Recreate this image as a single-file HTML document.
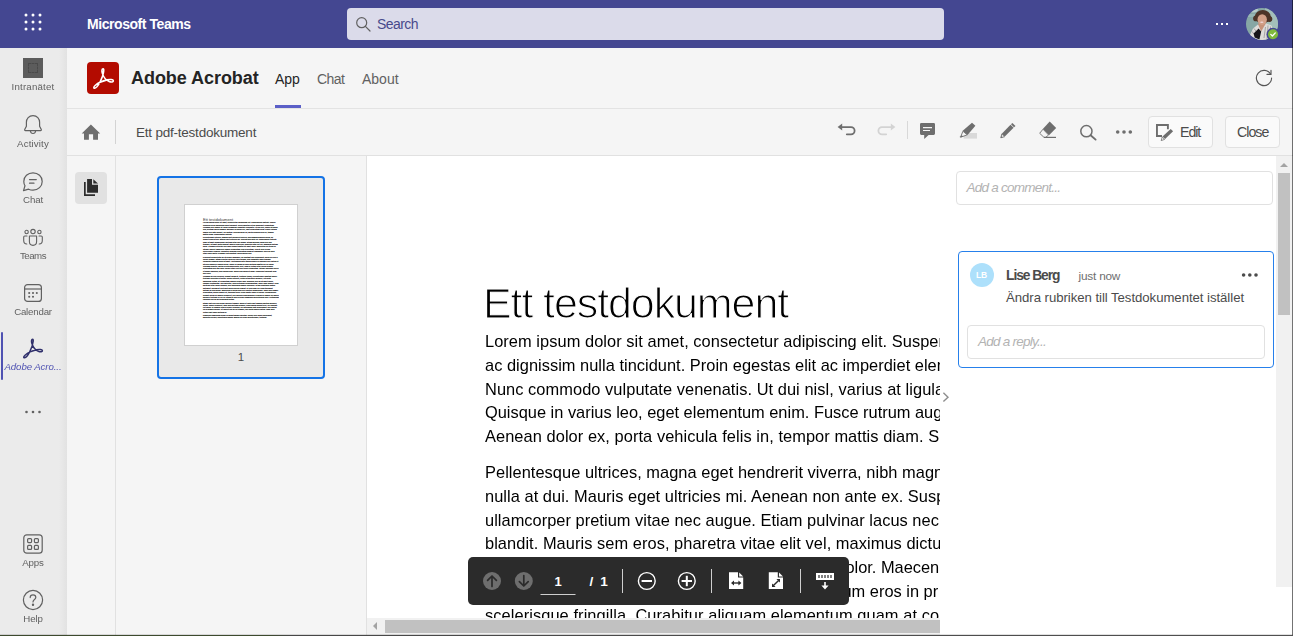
<!DOCTYPE html>
<html lang="en">
<head>
<meta charset="utf-8">
<title>Adobe Acrobat | Microsoft Teams</title>
<style>
*{box-sizing:border-box;margin:0;padding:0}
html,body{width:1293px;height:636px;overflow:hidden;background:#f5f5f5;font-family:"Liberation Sans",sans-serif;}
#root{position:relative;width:1293px;height:636px;overflow:hidden;background:#f5f5f5}
.abs{position:absolute}
.t{position:absolute;white-space:nowrap;line-height:1}
/* top bar */
#topbar{left:0;top:0;width:1293px;height:48px;background:#444791}
#search{left:347px;top:8px;width:597px;height:32px;border-radius:4px;background:#dbdbea}
/* rail */
#rail{left:0;top:48px;width:67px;height:588px;background:linear-gradient(to right,#ebebeb 0,#ebebeb 59px,#e2e2e2 67px)}
.rl{will-change:transform;position:absolute;left:0;width:66px;text-align:center;font-size:9.7px;line-height:12px;color:#616161;white-space:nowrap}
/* header */
#hdr{left:67px;top:48px;width:1226px;height:61px;background:#f5f5f5;border-bottom:1px solid #e3e3e3}
#tbar{left:67px;top:109px;width:1226px;height:47px;background:#f5f5f5;border-bottom:1px solid #e1e1e1}
.btn{position:absolute;top:116px;height:32px;border:1px solid #e1e1e1;border-radius:4px;background:#fafafa}
/* doc */
#doc{left:367px;top:156px;width:573px;height:462px;background:#fff;overflow:hidden}
.dl{will-change:transform;position:absolute;left:117.8px;white-space:nowrap;font-size:16.4px;line-height:20px;color:#000;letter-spacing:0}
#cpanel{left:940px;top:156px;width:353px;height:480px;background:#fff}
</style>
</head>
<body>
<div id="root">

<!-- ===== TOP BAR ===== -->
<div id="topbar" class="abs">
  <svg class="abs" style="left:22px;top:11px" width="22" height="22" viewBox="0 0 22 22" fill="#fff">
    <circle cx="4" cy="4" r="1.5"/><circle cx="11" cy="4" r="1.5"/><circle cx="18" cy="4" r="1.5"/>
    <circle cx="4" cy="11" r="1.5"/><circle cx="11" cy="11" r="1.5"/><circle cx="18" cy="11" r="1.5"/>
    <circle cx="4" cy="18" r="1.5"/><circle cx="11" cy="18" r="1.5"/><circle cx="18" cy="18" r="1.5"/>
  </svg>
  <div class="t" style="left:87px;top:17px;font-size:14px;font-weight:bold;color:#fff;letter-spacing:-0.44px">Microsoft Teams</div>
  <div id="search" class="abs">
    <svg class="abs" style="left:8px;top:8px" width="16" height="16" viewBox="0 0 16 16" fill="none" stroke="#616161" stroke-width="1.2" stroke-linecap="round"><circle cx="6.7" cy="6.7" r="5"/><path d="M10.4 10.4 L15 15"/></svg>
    <div class="t" style="left:30px;top:9px;font-size:14px;color:#484a8c;letter-spacing:-0.55px">Search</div>
  </div>
  <svg class="abs" style="left:1215.2px;top:22px" width="16" height="4" viewBox="0 0 16 4" fill="#fff"><rect x="1" y="1" width="2" height="2"/><rect x="6" y="1" width="2" height="2"/><rect x="11" y="1" width="2" height="2"/></svg>
  <!-- avatar -->
  <svg class="abs" style="left:1244px;top:6px" width="38" height="38" viewBox="0 0 38 38">
    <defs><clipPath id="avc"><circle cx="18" cy="18" r="16"/></clipPath></defs>
    <g clip-path="url(#avc)">
      <rect width="38" height="38" fill="#86a7a5"/>
      <rect x="21" y="0" width="17" height="38" fill="#a3bfba"/>
      <rect x="0" y="8" width="14" height="3" fill="#9dbcbb" opacity="0.7"/>
      <ellipse cx="9" cy="4" rx="5" ry="2.4" fill="#c5d6d3" opacity="0.8"/>
      <path d="M5 31 L9 22.5 L14 18.6 L17.5 22 L22 17.6 L27.5 19.6 L30 25 L30 36 L7 36 Z" fill="#dedcda"/>
      <path d="M8 25.5 L12 30.5 M10 22.5 L14.5 28.5 M21.5 21 L20 32 M24 19.5 L23 33 M26.5 20.5 L26 30" stroke="#8c8c8c" stroke-width="0.7" fill="none"/>
      <path d="M13.8 17.6 L22 17 L17.2 25.4 Z" fill="#c79279"/>
      <path d="M9.6 27.4 L14.6 22.4 L17.2 25.4 L15.4 33.6 L10.6 31.6 Z" fill="#17151a"/>
      <ellipse cx="18.8" cy="10.6" rx="8" ry="6.6" fill="#4d3427"/>
      <circle cx="12" cy="12.4" r="2.9" fill="#4d3427"/>
      <circle cx="25.4" cy="13" r="3" fill="#4d3427"/>
      <ellipse cx="18.2" cy="13.6" rx="4.7" ry="5.3" fill="#d3a088"/>
      <ellipse cx="17.8" cy="16.3" rx="1.7" ry="0.8" fill="#f0d6d6"/>
    </g>
    <circle cx="29" cy="28.3" r="6.5" fill="#444791"/>
    <circle cx="29" cy="28.3" r="5" fill="#7fba3c"/>
    <path d="M26.8 28.4 L28.4 30 L31.3 26.9" fill="none" stroke="#fff" stroke-width="1.3" stroke-linecap="round" stroke-linejoin="round"/>
  </svg>
</div>

<!-- ===== LEFT RAIL ===== -->
<div id="rail" class="abs">
  <!-- Intranätet -->
  <div class="abs" style="left:23px;top:10px;width:20px;height:20px;background:#5c5c5c"></div>
  <div class="abs" style="left:28px;top:15px;width:10px;height:10px;border:1px dashed #4a4a4a"></div>
  <div class="rl" style="top:33px;letter-spacing:0.2px">Intranätet</div>
  <!-- Activity -->
  <svg class="abs" style="left:23px;top:66px" width="20" height="22" viewBox="0 0 20 22" fill="none" stroke="#616161" stroke-width="1.2" stroke-linejoin="round" stroke-linecap="round"><path d="M10 1.6 C5.9 1.6 3.4 4.6 3.4 8.2 L3.4 12.2 L1.7 15.6 C1.5 16.1 1.8 16.6 2.4 16.6 L17.6 16.6 C18.2 16.6 18.5 16.1 18.3 15.6 L16.6 12.2 L16.6 8.2 C16.6 4.6 14.1 1.6 10 1.6 Z"/><path d="M7.4 17 C7.6 18.6 8.7 19.5 10 19.5 C11.3 19.5 12.4 18.6 12.6 17"/></svg>
  <div class="rl" style="top:90px;letter-spacing:0.15px">Activity</div>
  <!-- Chat -->
  <svg class="abs" style="left:22px;top:122.7px" width="22" height="22" viewBox="0 0 22 22" fill="none" stroke="#616161" stroke-width="1.2" stroke-linejoin="round" stroke-linecap="round"><path d="M11 1.8 C5.8 1.8 1.8 5.6 1.8 10.4 C1.8 12 2.3 13.5 3 14.7 L1.5 19.6 L6.6 18.2 C7.9 18.8 9.4 19.1 11 19.1 C16.2 19.1 20.2 15.3 20.2 10.4 C20.2 5.6 16.2 1.8 11 1.8 Z"/><path d="M7.5 8.6 L14.3 8.6 M7.5 12.2 L12 12.2"/></svg>
  <div class="rl" style="top:146px;letter-spacing:-0.15px">Chat</div>
  <!-- Teams -->
  <svg class="abs" style="left:22px;top:180px" width="22" height="20" viewBox="0 0 22 20" fill="none" stroke="#616161" stroke-width="1.1" stroke-linejoin="round" stroke-linecap="round"><circle cx="11" cy="3.6" r="2.2"/><circle cx="4.6" cy="4" r="1.7"/><circle cx="17.4" cy="4" r="1.7"/><path d="M7.4 8 L14.6 8 L14.6 13.6 C14.6 15.8 13 17.4 11 17.4 C9 17.4 7.4 15.8 7.4 13.6 Z"/><path d="M5 8 L2.8 8 C2.2 8 1.7 8.5 1.7 9.1 L1.7 12.6 C1.7 14.6 3 16 4.8 16"/><path d="M17 8 L19.2 8 C19.8 8 20.3 8.5 20.3 9.1 L20.3 12.6 C20.3 14.6 19 16 17.2 16"/></svg>
  <div class="rl" style="top:202px;letter-spacing:-0.5px">Teams</div>
  <!-- Calendar -->
  <svg class="abs" style="left:23px;top:235px" width="20" height="20" viewBox="0 0 20 20" fill="none" stroke="#616161" stroke-width="1.2"><rect x="1.6" y="1.6" width="16.8" height="16.8" rx="3"/><path d="M1.6 6 L18.4 6"/><g fill="#616161" stroke="none"><circle cx="6.2" cy="10" r="1.05"/><circle cx="10" cy="10" r="1.05"/><circle cx="13.8" cy="10" r="1.05"/><circle cx="6.2" cy="13.8" r="1.05"/><circle cx="10" cy="13.8" r="1.05"/></g></svg>
  <div class="rl" style="top:258px;letter-spacing:-0.2px">Calendar</div>
  <!-- Adobe selected -->
  <div class="abs" style="left:1px;top:284px;width:2px;height:48px;background:#4f52b2;border-radius:1px"></div>
  <svg class="abs" style="left:22px;top:290px" width="22" height="21" viewBox="0 0 22 21" fill="none" stroke="#2f2f6b" stroke-width="1.5" stroke-linecap="round" stroke-linejoin="round"><path d="M10.6 1.2 C9.4 1.2 9.2 3.4 9.9 5.6 C10.8 8.6 13.2 12 16.4 13.4 C18.6 14.3 20.6 13.8 20.4 12.6 C20.2 11.4 17.4 11.2 14.4 11.8 C10.6 12.6 6 14.6 3 17.2 C1.4 18.6 1.4 20 2.6 19.8 C4 19.6 6 17.2 7.8 13.6 C9.6 10 11 5.6 11.2 3.2 C11.3 1.8 11.1 1.2 10.6 1.2 Z"/></svg>
  <div class="rl" style="top:313px;color:#4f52b2;font-style:italic;letter-spacing:-0.1px">Adobe Acro...</div>
  <!-- more -->
  <svg class="abs" style="left:24px;top:361px" width="18" height="6" viewBox="0 0 18 6" fill="#616161"><circle cx="2.5" cy="3" r="1.3"/><circle cx="9" cy="3" r="1.3"/><circle cx="15.5" cy="3" r="1.3"/></svg>
  <!-- Apps -->
  <svg class="abs" style="left:23px;top:486px" width="20" height="20" viewBox="0 0 20 20" fill="none" stroke="#616161" stroke-width="1.2"><rect x="0.8" y="0.8" width="18.4" height="18.4" rx="3"/><rect x="4.6" y="4.6" width="4" height="4" rx="1"/><rect x="11.4" y="4.6" width="4" height="4" rx="1"/><rect x="4.6" y="11.4" width="4" height="4" rx="1"/><rect x="11.4" y="11.4" width="4" height="4" rx="1"/></svg>
  <div class="rl" style="top:509px;letter-spacing:-0.1px">Apps</div>
  <!-- Help -->
  <svg class="abs" style="left:22px;top:541px" width="22" height="22" viewBox="0 0 22 22" fill="none" stroke="#616161" stroke-width="1.2" stroke-linecap="round"><circle cx="11" cy="11" r="9.6"/><path d="M8.2 8.6 C8.2 6.9 9.4 5.9 11 5.9 C12.6 5.9 13.8 6.9 13.8 8.4 C13.8 10.6 11 10.6 11 13"/><circle cx="11" cy="15.8" r="0.6" fill="#616161"/></svg>
  <div class="rl" style="top:565px;letter-spacing:-0.15px">Help</div>
</div>

<!-- ===== APP HEADER ===== -->
<div id="hdr" class="abs"></div>
<div class="abs" style="left:87px;top:62px;width:32px;height:32px;border-radius:4px;background:#b30b00"></div>
<svg class="abs" style="left:91.5px;top:66.5px" width="23" height="23" viewBox="0 0 22 21" fill="none" stroke="#fff" stroke-width="1.5" stroke-linecap="round" stroke-linejoin="round"><path d="M10.6 1.2 C9.4 1.2 9.2 3.4 9.9 5.6 C10.8 8.6 13.2 12 16.4 13.4 C18.6 14.3 20.6 13.8 20.4 12.6 C20.2 11.4 17.4 11.2 14.4 11.8 C10.6 12.6 6 14.6 3 17.2 C1.4 18.6 1.4 20 2.6 19.8 C4 19.6 6 17.2 7.8 13.6 C9.6 10 11 5.6 11.2 3.2 C11.3 1.8 11.1 1.2 10.6 1.2 Z"/></svg>
<div class="t" style="left:131px;top:69px;font-size:18px;font-weight:bold;color:#242424;letter-spacing:-0.05px">Adobe Acrobat</div>
<div class="t" style="left:275px;top:72px;font-size:14px;color:#242424">App</div>
<div class="t" style="left:317px;top:72px;font-size:14px;color:#616161;letter-spacing:-0.6px">Chat</div>
<div class="t" style="left:362px;top:72px;font-size:14px;color:#616161">About</div>
<div class="abs" style="left:275px;top:105px;width:26px;height:3px;background:#5b5fc7"></div>
<svg class="abs" style="left:1254px;top:68px" width="20" height="20" viewBox="0 0 20 20" fill="none" stroke="#555" stroke-width="1.15" stroke-linecap="round" stroke-linejoin="round"><path d="M16.6 6.2 A7.6 7.6 0 1 0 17.6 10"/><path d="M17 2.4 L17 6.4 L13 6.4"/></svg>

<!-- ===== ACROBAT TOOLBAR ===== -->
<div id="tbar" class="abs"></div>
<!-- home -->
<svg class="abs" style="left:80px;top:122px" width="22" height="20" viewBox="80 122 22 20"><path d="M90.9 124.5 L100.2 133.6 L98 133.6 L98 139.8 L93.1 139.8 L93.1 134.2 L88.9 134.2 L88.9 139.8 L84 139.8 L84 133.6 L81.7 133.6 Z" fill="#6e6e6e"/></svg>
<div class="t" style="left:136px;top:125.6px;font-size:13.5px;color:#4b4b4b;letter-spacing:-0.22px">Ett pdf-testdokument</div>
<!-- undo / redo -->
<svg class="abs" style="left:834px;top:118px" width="66" height="24" viewBox="834 118 66 24" fill="none" stroke-linecap="round">
  <path d="M842 127.1 L851 127.1 A3.6 3.6 0 0 1 851 134.3 L846.8 134.3" stroke="#6e6e6e" stroke-width="1.8"/>
  <path d="M837.6 127.1 L842.2 123.6 L842.2 130.6 Z" fill="#6e6e6e"/>
  <path d="M891 127.1 L882 127.1 A3.6 3.6 0 0 0 882 134.3 L886.2 134.3" stroke="#d3d3d3" stroke-width="1.8"/>
  <path d="M895.4 127.1 L890.8 123.6 L890.8 130.6 Z" fill="#d3d3d3"/>
</svg>
<div class="abs" style="left:907px;top:121px;width:1px;height:18px;background:#d8d8d8"></div>
<!-- comment -->
<svg class="abs" style="left:918px;top:120px" width="20" height="22" viewBox="918 120 20 22">
  <path d="M921.3 123 L933.7 123 Q935 123 935 124.3 L935 133.6 Q935 134.9 933.7 134.9 L928.6 134.9 L924.2 138.9 L924.2 134.9 L921.3 134.9 Q920 134.9 920 133.6 L920 124.3 Q920 123 921.3 123 Z" fill="#6e6e6e"/>
  <path d="M923 127.6 L932 127.6 M923 130.5 L930 130.5" stroke="#f5f5f5" stroke-width="1.2"/>
</svg>
<!-- highlighter -->
<svg class="abs" style="left:957px;top:120px" width="22" height="22" viewBox="957 120 22 22">
  <rect x="963.7" y="133" width="13.3" height="5.6" fill="#d9d9d9"/>
  <path d="M972 122.8 L975.4 125.8 L967.5 134.9 L962.7 130.8 Z" fill="#6e6e6e"/>
  <path d="M962.9 131.2 L967.2 134.8 L963 136.4 L961 136.2 Z" fill="#f5f5f5" stroke="#6e6e6e" stroke-width="0.9" stroke-linejoin="round"/>
  <path d="M961.2 135.6 L963.4 136.6 L960.8 137.8 L959.6 137 Z" fill="#6e6e6e"/>
</svg>
<!-- pencil -->
<svg class="abs" style="left:998px;top:120px" width="20" height="20" viewBox="998 120 20 20">
  <path d="M1012.4 122.9 L1015.5 125.9 L1014 127.3 L1011 124.3 Z" fill="#6e6e6e"/>
  <path d="M1010.5 124.8 L1013.6 127.7 L1004.8 136.6 L1001.8 133.7 Z" fill="#6e6e6e"/>
  <path d="M1001.8 134 L1004.5 136.7 L1000.8 137.8 Z" fill="#f5f5f5" stroke="#6e6e6e" stroke-width="0.9" stroke-linejoin="round"/>
  <path d="M1001.3 136 L1002.6 137.2 L1000.7 137.9 Z" fill="#6e6e6e"/>
</svg>
<!-- eraser -->
<svg class="abs" style="left:1037px;top:119px" width="22" height="22" viewBox="1037 119 22 22">
  <path d="M1049.7 121.6 L1056.2 128 L1049 135.3 L1042.8 128.9 Z" fill="#6e6e6e"/>
  <path d="M1043 129.2 L1048.6 135 L1045.6 137.4 L1044 137.4 L1039.7 133.3 Z" fill="#f5f5f5" stroke="#6e6e6e" stroke-width="0.9" stroke-linejoin="round"/>
  <path d="M1044 137.4 L1056 137.4" stroke="#6e6e6e" stroke-width="1.2"/>
</svg>
<!-- search -->
<svg class="abs" style="left:1077px;top:122px" width="22" height="20" viewBox="1077 122 22 20" fill="none" stroke="#6e6e6e" stroke-linecap="round"><circle cx="1086.4" cy="131.2" r="5.6" stroke-width="1.5"/><path d="M1090.6 135.2 L1095.6 139.6" stroke-width="1.9"/></svg>
<!-- more -->
<svg class="abs" style="left:1114px;top:129px" width="20" height="6" viewBox="1114 129 20 6" fill="#6e6e6e"><circle cx="1117.7" cy="132" r="1.8"/><circle cx="1124" cy="132" r="1.8"/><circle cx="1130.3" cy="132" r="1.8"/></svg>
<!-- Edit / Close -->
<div class="btn" style="left:1148px;width:65px"></div>
<svg class="abs" style="left:1154px;top:122px" width="22" height="22" viewBox="1154 122 22 22">
  <path d="M1167.9 129.3 L1167.9 125.05 L1156.95 125.05 L1156.95 135.95 L1162 135.95" fill="none" stroke="#6e6e6e" stroke-width="1.9" stroke-linejoin="miter"/>
  <path d="M1170.7 128.9 L1173.1 131.3 L1165.1 139 L1162.5 136.5 Z" fill="#6e6e6e"/>
  <path d="M1162.2 137 L1164.6 139.4 L1161.2 140.6 Z" fill="#fafafa" stroke="#6e6e6e" stroke-width="0.8" stroke-linejoin="round"/>
</svg>
<div class="t" style="left:1180px;top:125px;font-size:14.2px;color:#4b4b4b;letter-spacing:-1.05px">Edit</div>
<div class="btn" style="left:1225px;width:55px"></div>
<div class="t" style="left:1237px;top:125px;font-size:14.2px;color:#4b4b4b;letter-spacing:-1.0px">Close</div>

<!-- ===== LEFT PDF SIDEBAR ===== -->
<div class="abs" style="left:115px;top:120px;width:1px;height:24px;background:#d3d3d3"></div>
<div class="abs" style="left:115px;top:156px;width:1px;height:480px;background:#e1e1e1"></div>
<div class="abs" style="left:366px;top:156px;width:1px;height:480px;background:#e1e1e1"></div>
<div class="abs" style="left:75px;top:172px;width:32px;height:32px;border-radius:4px;background:#e1e1e1"></div>
<svg class="abs" style="left:82px;top:177px" width="18" height="20" viewBox="82 177 18 20" fill="#2c2c2c">
  <path d="M87.1 179 L92 179 L92 184.8 L98 184.8 L98 192.7 L87.1 192.7 Z"/>
  <path d="M93.3 179.2 L98 183.6 L93.3 183.6 Z"/>
  <path d="M84 182 L85.7 182 L85.7 194.3 L95 194.3 L95 195.9 L84 195.9 Z"/>
</svg>
<!-- thumbnail card -->
<div class="abs" style="left:157px;top:176px;width:168px;height:203px;border:2px solid #1473e6;border-radius:4px;background:#e9e9e9"></div>
<div class="abs" style="left:184px;top:204px;width:114px;height:142px;background:#fff;border:1px solid #d0d0d0"></div>
<div class="abs" id="thumbtxt" style="-webkit-text-stroke:0.9px #000;left:203px;top:217.3px;width:760px;transform:scale(0.1);transform-origin:0 0;color:#000;font-size:18px;line-height:23.2px;text-align:left">
<div style="font-size:40px;line-height:44px;margin-bottom:2px;color:#333;-webkit-text-stroke:0">Ett testdokument</div>
<p style="margin-bottom:9px;font-weight:bold">Lorem ipsum dolor sit amet, consectetur adipiscing elit. Suspendisse potenti. Donec vehicula ex ac dignissim nulla tincidunt. Proin egestas elit ac imperdiet elementum. Vivamus sed sapien at. Nunc commodo vulputate venenatis. Ut dui nisl, varius at ligula sed, pretium mollis magna. Quisque in varius leo, eget elementum enim. Fusce rutrum augue nec ante aliquet, vel dictum. Aenean dolor ex, porta vehicula felis in, tempor mattis diam. Suspendisse potenti.</p>
<p style="margin-bottom:9px;font-weight:bold">Pellentesque ultrices, magna eget hendrerit viverra, nibh magna gravida lorem, ac aliquet nulla at dui. Mauris eget ultricies mi. Aenean non ante ex. Suspendisse potenti. Nam sit amet ullamcorper pretium vitae nec augue. Etiam pulvinar lacus nec nisi tempus, sit amet porta blandit. Mauris sem eros, pharetra vitae elit vel, maximus dictum nunc. Vivamus at tortor sed nunc aliquet mattis sit amet dolor. Maecenas vel tellus id. Integer laoreet ligula nec sapien fermentum eros in pretium. Sed ut felis a nibh scelerisque fringilla. Curabitur aliquam elementum quam at commodo. Duis ac nibh vitae nunc porta. Aliquam erat volutpat. Nulla facilisi sed.</p>
<p style="margin-bottom:9px;font-weight:bold">Praesent consectetur mi ut neque maximus, ac volutpat nisi consequat. Nulla eu felis a lorem semper. Etiam efficitur nulla vel eros finibus, non vulputate nunc tempus. Curabitur dapibus urna sit amet. Vestibulum ante ipsum primis in faucibus orci luctus et ultrices posuere cubilia curae. Fusce in quam id risus pretium sagittis vel eu lacus. Aliquam lobortis, metus id interdum porta, velit. Nam in lectus vitae lorem congue fermentum sed non nibh. Donec vitae eros nec tellus elementum. Integer faucibus libero et augue pulvinar, quis lacinia odio. Morbi non ligula ut diam. Phasellus tincidunt sem nec eros.</p>
<p style="margin-bottom:9px;font-weight:bold">Vivamus ac nisl eleifend, blandit quam ut, tristique turpis. Pellentesque habitant morbi tristique senectus et netus. Donec ultrices, lectus at porttitor posuere, elit justo dignissim lectus, at elementum mauris neque quis. Quisque sed mi sit amet lacus congue vestibulum. Sed molestie, urna id tempor condimentum, dolor nibh aliquet. Cras porta mi vitae lacus fringilla, sed bibendum sapien convallis. In hac habitasse platea dictumst. Nullam ut velit eget nulla viverra feugiat. Ut sed enim vel risus tincidunt dictum ac sed neque. Maecenas a lorem non orci efficitur ullamcorper. Nunc quis augue fermentum, mollis sapien ut, tincidunt arcu. Proin auctor nunc et varius. Suspendisse feugiat lorem eu mauris hendrerit, nec facilisis nulla gravida. Aenean id sapien vel purus posuere tristique in vel ex. Etiam at odio in nibh commodo pellentesque non. Vestibulum rhoncus nisi ac mi consequat luctus.</p>
<p style="margin-bottom:9px;font-weight:bold">Etiam eget nisl sed lorem facilisis tempus. Morbi et justo eget magna egestas posuere lorem. Fusce hendrerit, arcu non pretium sodales, nulla ipsum aliquet orci, vel suscipit elit ligula. In congue nibh a neque vehicula, vel accumsan ante malesuada. Sed auctor ex in magna cursus. Ut laoreet dui ac ex tempus, nec porta sapien luctus. Nam quis lectus eget nunc pretium in.</p>
<p style="font-weight:bold">Phasellus dignissim lorem in ligula tempor egestas. Donec sed lacus consequat, pharetra ex non, sollicitudin ipsum. Mauris vel nibh pellentesque, tristique.</p>
</div>
<div class="t" style="left:157px;top:351.7px;width:168px;text-align:center;font-size:11.5px;color:#4b4b4b">1</div>

<!-- ===== DOC ===== -->
<div id="doc" class="abs">
  <div class="t" id="ttl" style="will-change:transform;left:116px;top:126.3px;font-size:43px;color:#000;letter-spacing:-1.1px;-webkit-text-stroke:1.2px #fff">Ett testdokument</div>
  <div class="dl" style="top:175.3px;letter-spacing:0.056px">Lorem ipsum dolor sit amet, consectetur adipiscing elit. Suspendisse potenti</div>
  <div class="dl" style="top:199px;letter-spacing:0.026px">ac dignissim nulla tincidunt. Proin egestas elit ac imperdiet elementum.</div>
  <div class="dl" style="top:222.7px;letter-spacing:0.058px">Nunc commodo vulputate venenatis. Ut dui nisl, varius at ligula sed,</div>
  <div class="dl" style="top:246.4px;letter-spacing:0.000px">Quisque in varius leo, eget elementum enim. Fusce rutrum augue nec</div>
  <div class="dl" style="top:270.1px;letter-spacing:0.065px">Aenean dolor ex, porta vehicula felis in, tempor mattis diam. Suspendisse</div>
  <div class="dl" style="top:306.3px;letter-spacing:0.043px">Pellentesque ultrices, magna eget hendrerit viverra, nibh magna gravida</div>
  <div class="dl" style="top:330px;letter-spacing:0.047px">nulla at dui. Mauris eget ultricies mi. Aenean non ante ex. Suspendisse</div>
  <div class="dl" style="top:353.7px;letter-spacing:0.033px">ullamcorper pretium vitae nec augue. Etiam pulvinar lacus nec nisi</div>
  <div class="dl" style="top:377.4px;letter-spacing:0.056px">blandit. Mauris sem eros, pharetra vitae elit vel, maximus dictum</div>
  <div class="dl" style="top:401.1px;left:auto;right:-16.5px">Vivamus at tortor sed nunc aliquet mattis sit amet dolor. Maecenas</div>
  <div class="dl" style="top:424.8px;left:auto;right:1.8px">Integer laoreet ligula nec sapien fermentum eros in pr</div>
  <div class="dl" style="top:448.5px;letter-spacing:0.083px">scelerisque fringilla. Curabitur aliquam elementum quam at commodo</div>
</div>
<!-- horizontal scrollbar -->
<div class="abs" style="left:367px;top:618px;width:573px;height:17px;background:#f1f1f1"></div>
<div class="abs" style="left:385px;top:620px;width:557px;height:13px;background:#c1c1c1"></div>
<svg class="abs" style="left:371px;top:621px" width="8" height="10" viewBox="0 0 8 10"><path d="M6 1 L2 5 L6 9 Z" fill="#a3a3a3"/></svg>
<!-- floating toolbar -->
<div class="abs" id="ftb" style="left:468px;top:557px;width:381px;height:48px;border-radius:5px;background:#2b2b2b"></div>
<svg class="abs" style="left:468px;top:557px" width="381" height="48" viewBox="468 557 381 48">
  <circle cx="492" cy="581" r="9" fill="#6e6e6e"/>
  <path d="M492 586.4 L492 576.4 M487.6 580.4 L492 576 L496.4 580.4" fill="none" stroke="#2b2b2b" stroke-width="1.7" stroke-linecap="round" stroke-linejoin="round"/>
  <circle cx="523.8" cy="581" r="9" fill="#6e6e6e"/>
  <path d="M523.8 575.6 L523.8 585.6 M519.4 581.6 L523.8 586 L528.2 581.6" fill="none" stroke="#2b2b2b" stroke-width="1.7" stroke-linecap="round" stroke-linejoin="round"/>
  <rect x="540.5" y="594" width="35" height="1" fill="#cfcfcf"/>
  <rect x="622" y="569" width="1" height="24" fill="#cfcfcf"/>
  <circle cx="646.8" cy="581" r="8.4" fill="none" stroke="#fff" stroke-width="1.4"/>
  <rect x="641.6" y="580" width="10.4" height="2" fill="#fff"/>
  <circle cx="686.8" cy="581" r="8.4" fill="none" stroke="#fff" stroke-width="1.4"/>
  <rect x="681.6" y="580" width="10.4" height="2" fill="#fff"/>
  <rect x="685.8" y="575.8" width="2" height="10.4" fill="#fff"/>
  <rect x="711" y="569" width="1" height="24" fill="#cfcfcf"/>
  <!-- fit width -->
  <path d="M729 572.3 L738 572.3 L738 577.6 L743.2 577.6 L743.2 589 L729 589 Z" fill="#fff"/>
  <path d="M739.2 572.5 L743.2 576.4 L739.2 576.4 Z" fill="#fff"/>
  <path d="M733 583 L739.4 583" stroke="#2b2b2b" stroke-width="1.4"/>
  <path d="M734 580.4 L731 583 L734 585.6 Z M738.4 580.4 L741.4 583 L738.4 585.6 Z" fill="#2b2b2b"/>
  <!-- fit page -->
  <path d="M768.8 572.3 L777.8 572.3 L777.8 577.6 L783 577.6 L783 589 L768.8 589 Z" fill="#fff"/>
  <path d="M779 572.5 L783 576.4 L779 576.4 Z" fill="#fff"/>
  <path d="M773.4 585.6 L778.6 580.4" stroke="#2b2b2b" stroke-width="1.4"/>
  <path d="M772 583.4 L772 587 L775.6 587 Z M780 582.6 L780 579 L776.4 579 Z" fill="#2b2b2b"/>
  <rect x="800" y="569" width="1" height="24" fill="#cfcfcf"/>
  <!-- dock -->
  <rect x="816" y="573" width="18" height="7" fill="#fff"/>
  <path d="M819 575 L819 578 M822 575 L822 578 M825 575 L825 578 M828 575 L828 578 M831 575 L831 578" stroke="#2b2b2b" stroke-width="1.2"/>
  <path d="M825 582 L825 588" stroke="#fff" stroke-width="1.6"/>
  <path d="M821.4 585.6 L825 589.6 L828.6 585.6 Z" fill="#fff"/>
</svg>
<div class="t" style="left:540px;top:575px;width:36px;text-align:center;font-size:13px;font-weight:bold;color:#fff">1</div>
<div class="t" style="left:589.5px;top:574.6px;font-size:13.6px;font-weight:bold;color:#fff;letter-spacing:0.4px;word-spacing:2.4px">/ 1</div>
<div id="cpanel" class="abs"></div>
<svg class="abs" style="left:941px;top:391px" width="10" height="12" viewBox="0 0 10 12" fill="none" stroke="#8e8e8e" stroke-width="1.4"><path d="M2.4 1.8 L7 6.2 L2.4 10.6"/></svg>
<div class="abs" style="left:956px;top:171px;width:317px;height:34px;border:1px solid #e1e1e1;border-radius:4px;background:#fff"></div>
<div class="t" style="left:966.5px;top:181px;font-size:13.5px;font-style:italic;color:#b3b3b3;letter-spacing:-0.75px">Add a comment...</div>
<div class="abs" style="left:958px;top:251px;width:316px;height:117px;border:1px solid #2680eb;border-radius:4px;background:#fff"></div>
<div class="abs" style="left:969.5px;top:262.5px;width:24px;height:24px;border-radius:50%;background:#ade0fb"></div>
<div class="t" style="left:969.5px;top:270.5px;width:24px;text-align:center;font-size:8.5px;font-weight:bold;color:#fff;letter-spacing:-0.2px">LB</div>
<div class="t" style="left:1006px;top:268.5px;font-size:13.8px;font-weight:bold;color:#4b4b4b;letter-spacing:-1.05px">Lise Berg</div>
<div class="t" style="left:1078.5px;top:270.5px;font-size:11.8px;color:#6e6e6e;letter-spacing:-0.2px">just now</div>
<svg class="abs" style="left:1240px;top:272px" width="20" height="6" viewBox="1240 272 20 6" fill="#4b4b4b"><circle cx="1243.6" cy="275" r="1.8"/><circle cx="1249.8" cy="275" r="1.8"/><circle cx="1256" cy="275" r="1.8"/></svg>
<div class="t" style="left:1006px;top:290.5px;font-size:13.2px;color:#4b4b4b;letter-spacing:-0.05px">Ändra rubriken till Testdokumentet istället</div>
<div class="abs" style="left:967px;top:325px;width:298px;height:34px;border:1px solid #e1e1e1;border-radius:4px;background:#fff"></div>
<div class="t" style="left:978px;top:335px;font-size:13.5px;font-style:italic;color:#b3b3b3;letter-spacing:-0.75px">Add a reply...</div>
<!-- v scrollbar -->
<div class="abs" style="left:1276px;top:156px;width:16px;height:431px;background:#f1f1f1"></div>
<div class="abs" style="left:1278px;top:173px;width:12px;height:142px;background:#c1c1c1"></div>
<svg class="abs" style="left:1279px;top:161px" width="10" height="8" viewBox="0 0 10 8"><path d="M1 6 L5 2 L9 6 Z" fill="#a3a3a3"/></svg>

<!-- window edge -->
<div class="abs" style="left:1292px;top:0;width:1px;height:636px;background:rgba(0,0,0,0.55)"></div>
<div class="abs" style="left:0;top:634px;width:1293px;height:1px;background:rgba(0,0,0,0.12)"></div>
<div class="abs" style="left:0;top:635px;width:1293px;height:1px;background:linear-gradient(to right,#3d4a2e 0,#3d4a2e 270px,#474747 290px,#505050 100%)"></div>
</div>
</body>
</html>
